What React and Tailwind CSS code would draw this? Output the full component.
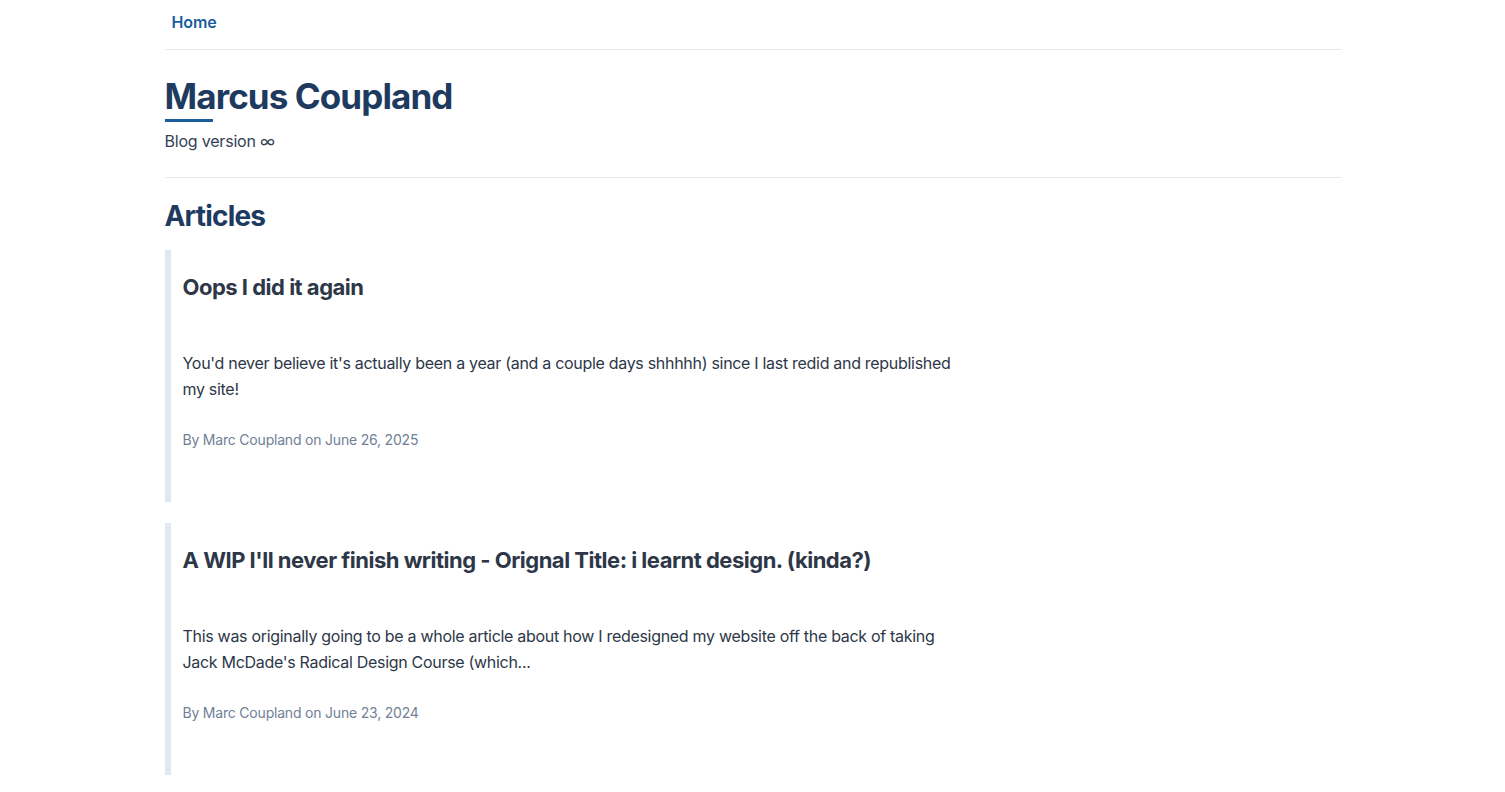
const articles = [
  {
    title: "Oops I did it again",
    excerpt:
      "You'd never believe it's actually been a year (and a couple days shhhhh) since I last redid and republished my site!",
    date: "June 26, 2025",
  },
  {
    title: "A WIP I'll never finish writing - Orignal Title: i learnt design. (kinda?)",
    excerpt:
      "This was originally going to be a whole article about how I redesigned my website off the back of taking Jack McDade's Radical Design Course (which...",
    date: "June 23, 2024",
  },
];

const App = () => {
  return (
    <div className="min-h-screen bg-white font-['Inter',sans-serif] text-[#2d3748]">
      <div className="mx-auto max-w-[1176px]">
        <nav className="h-[50px] border-b border-[#e5e9f0] px-[7px] pt-[10px]">
          <a href="#" className="text-[16px] font-semibold leading-[22px] tracking-[-0.1px] text-[#1b5e9e]">
            Home
          </a>
        </nav>

        <header className="border-b border-[#e5e9f0] pt-[26px] pb-[24px]">
          <h1 className="text-[35px] font-bold leading-[40px] tracking-[-0.9px] text-[#1e3a5f]">
            Marcus Coupland
          </h1>
          <div className="mt-[3px] h-[3px] w-[48px] bg-[#1b5e9e]" />
          <p className="mt-[7px] text-[16px] leading-[24px] tracking-[-0.2px] text-[#334155]">
            Blog version ∞
          </p>
        </header>

        <main className="pt-[20px]">
          <h2 className="text-[28px] font-bold leading-[36px] tracking-[-0.8px] text-[#1e3a5f]">
            Articles
          </h2>
          <div className="mt-[16px] flex flex-col gap-[21px]">
            {articles.map((a) => (
              <article
                key={a.title}
                className="h-[252px] border-l-[6px] border-[#e2e8f0] pl-[12px] pt-[23px]"
              >
                <h3 className="text-[22px] font-bold leading-[28px] tracking-[-0.5px] text-[#2d3748]">
                  {a.title}
                </h3>
                <p className="mt-[49px] max-w-[780px] text-[16px] leading-[26px] tracking-[-0.3px] text-[#2d3748]">
                  {a.excerpt}
                </p>
                <p className="mt-[28px] text-[14px] leading-[20px] tracking-[-0.2px] text-[#718096]">
                  By Marc Coupland on {a.date}
                </p>
              </article>
            ))}
          </div>
        </main>
      </div>
    </div>
  );
};

export default App;
